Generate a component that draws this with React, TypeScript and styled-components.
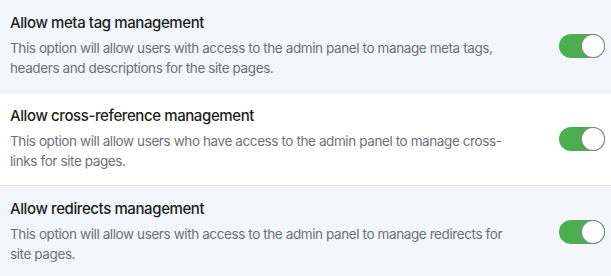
import styled, { createGlobalStyle } from 'styled-components';

const GlobalStyle = createGlobalStyle`
    html, body {
        margin: 0;
        padding: 0;
        background: #ffffff;
    }
    body {
        font-family: Inter, "Noto Sans", "Liberation Sans", sans-serif;
        -webkit-font-smoothing: antialiased;
    }
`;

const List = styled.ul`
    list-style: none;
    margin: 0;
    padding: 0;
    width: 611px;
`;

const Row = styled.li<{ $tinted: boolean }>`
    display: flex;
    align-items: center;
    justify-content: space-between;
    background: ${({ $tinted }) => ($tinted ? '#f3f6fa' : '#ffffff')};
    border-bottom: 1px solid #e4e8ed;
    padding: 13px 6px 14px 10px;

    &:last-child {
        border-bottom: none;
    }
`;

const Body = styled.div`
    display: flex;
    flex-direction: column;
    gap: 5px;
`;

const Title = styled.div`
    color: #1d1e20;
    font-size: 15px;
    font-weight: 500;
    line-height: 20px;
    letter-spacing: -0.4px;
`;

const Description = styled.p`
    margin: 0;
    max-width: 500px;
    color: #6e7179;
    font-size: 13.5px;
    line-height: 20px;
    letter-spacing: -0.4px;
`;

const Track = styled.span`
    position: relative;
    display: inline-block;
    flex-shrink: 0;
    width: 46px;
    height: 24px;
    border-radius: 12px;
    background: #4cae51;
`;

const Knob = styled.span`
    position: absolute;
    top: 1px;
    right: 1px;
    width: 22px;
    height: 22px;
    border-radius: 50%;
    background: #ffffff;
    box-shadow: 0 0 0 1px #7f8a7f;
`;

const options = [
    {
        title: 'Allow meta tag management',
        text: 'This option will allow users with access to the admin panel to manage meta tags, headers and descriptions for the site pages.',
    },
    {
        title: 'Allow cross-reference management',
        text: 'This option will allow users who have access to the admin panel to manage cross-links for site pages.',
    },
    {
        title: 'Allow redirects management',
        text: 'This option will allow users with access to the admin panel to manage redirects for site pages.',
    },
];

export default function App() {
    return (
        <>
            <GlobalStyle />
            <List>
                {options.map((o, i) => (
                    <Row key={o.title} $tinted={i !== 1}>
                        <Body>
                            <Title>{o.title}</Title>
                            <Description>{o.text}</Description>
                        </Body>
                        <Track>
                            <Knob />
                        </Track>
                    </Row>
                ))}
            </List>
        </>
    );
}
